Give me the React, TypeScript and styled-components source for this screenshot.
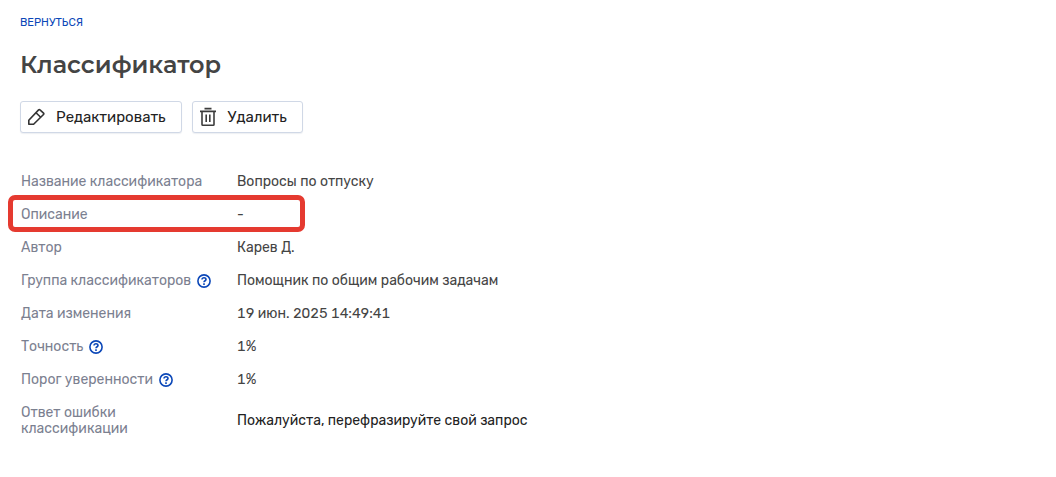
import React from "react";
import styled, { createGlobalStyle } from "styled-components";

const GlobalStyle = createGlobalStyle`
  *, *::before, *::after { box-sizing: border-box; }
  body {
    margin: 0;
    background: #ffffff;
    color: #444444;
    font-family: Rubik, Inter, "Liberation Sans", sans-serif;
    font-size: 14px;
    line-height: 16px;
    font-variant-numeric: tabular-nums;
  }
`;

const Page = styled.main`
  padding: 16px 20px 24px;
`;

const BackLink = styled.a`
  display: block;
  width: fit-content;
  color: #0b47b8;
  font-size: 11px;
  line-height: 13px;
  text-decoration: none;
  text-transform: uppercase;
`;

const Title = styled.h1`
  margin: 20px 0;
  color: #444444;
  font-family: Montserrat, Inter, sans-serif;
  font-size: 24px;
  font-weight: 600;
  line-height: 32px;
`;

const Toolbar = styled.div`
  display: flex;
  gap: 10px;
  margin-bottom: 33px;
`;

const ActionButton = styled.button`
  display: flex;
  align-items: center;
  gap: 10px;
  height: 32px;
  padding: 0 15px 0 5px;
  border: 1px solid #d0d8e6;
  border-radius: 3px;
  background: #ffffff;
  box-shadow: 0 1px 1px rgba(40, 60, 100, 0.08);
  color: #222222;
  font: inherit;
  font-size: 15px;
  cursor: pointer;
`;

const Details = styled.dl`
  display: flex;
  flex-direction: column;
  gap: 1px;
  margin: 0;
`;

const Row = styled.div<{ $marked?: boolean }>`
  position: relative;
  display: flex;
  align-items: center;
  padding: 8px 1px;

  &::after {
    content: "";
    display: ${(p) => (p.$marked ? "block" : "none")};
    position: absolute;
    top: -4px;
    bottom: -1px;
    left: -12px;
    width: 297px;
    border: 5px solid #e53a30;
    border-radius: 7px;
    pointer-events: none;
  }
`;

const Label = styled.dt`
  display: flex;
  align-items: center;
  gap: 6px;
  flex: 0 0 216px;
  padding-right: 16px;
  color: #7b8090;
`;

const Value = styled.dd<{ $dark?: boolean }>`
  margin: 0;
  color: ${(p) => (p.$dark ? "#222222" : "#444444")};
`;

const Help = styled.button`
  display: flex;
  margin: 0;
  padding: 0;
  border: 0;
  background: none;
  color: #0b47b8;
  cursor: help;
`;

const PencilIcon = () => (
  <svg width="20" height="20" viewBox="0 0 20 20" fill="none" stroke="#333333" strokeWidth="1.6" strokeLinejoin="round" aria-hidden="true">
    <path d="M2.8 17.3V13.2L12.6 2.9Q13.3 2.2 14 2.9L17.5 6.1Q18.2 6.8 17.5 7.5L7.6 17.3Z" />
    <path d="M10 5.7L14.7 10.3" />
  </svg>
);

const TrashIcon = () => (
  <svg width="20" height="20" viewBox="0 0 20 20" fill="none" stroke="#3c3c3c" strokeWidth="1.6" aria-hidden="true">
    <path d="M6.5 1.6H13.5M2 4.4H18M4 4.4V17.4Q4 18.2 4.8 18.2H15.2Q16 18.2 16 17.4V4.4M8.2 7.5V15M11.8 7.5V15" />
  </svg>
);

const HelpIcon = () => (
  <svg width="14" height="14" viewBox="0 0 14 14" fill="none" stroke="currentColor" strokeWidth="1.6" aria-hidden="true">
    <circle cx="7" cy="7" r="6.1" />
    <path d="M5 5.6C5 4.4 5.8 3.8 7 3.8S9 4.5 9 5.5C9 6.7 7 6.8 7 8.3" />
    <path d="M7 9.3V10.9" />
  </svg>
);

interface Field {
  label: string;
  value: string;
  help?: boolean;
  marked?: boolean;
  dark?: boolean;
}

const fields: Field[] = [
  { label: "Название классификатора", value: "Вопросы по отпуску" },
  { label: "Описание", value: "-", marked: true },
  { label: "Автор", value: "Карев Д." },
  { label: "Группа классификаторов", value: "Помощник по общим рабочим задачам", help: true },
  { label: "Дата изменения", value: "19 июн. 2025 14:49:41" },
  { label: "Точность", value: "1%", help: true },
  { label: "Порог уверенности", value: "1%", help: true },
  { label: "Ответ ошибки классификации", value: "Пожалуйста, перефразируйте свой запрос", dark: true },
];

export default function App() {
  return (
    <>
      <GlobalStyle />
      <Page>
        <BackLink href="#">Вернуться</BackLink>
        <Title>Классификатор</Title>
        <Toolbar>
          <ActionButton type="button">
            <PencilIcon />
            Редактировать
          </ActionButton>
          <ActionButton type="button">
            <TrashIcon />
            Удалить
          </ActionButton>
        </Toolbar>
        <Details>
          {fields.map((f) => (
            <Row key={f.label} $marked={f.marked}>
              <Label>
                {f.label}
                {f.help && (
                  <Help type="button" aria-label={f.label}>
                    <HelpIcon />
                  </Help>
                )}
              </Label>
              <Value $dark={f.dark}>{f.value}</Value>
            </Row>
          ))}
        </Details>
      </Page>
    </>
  );
}
